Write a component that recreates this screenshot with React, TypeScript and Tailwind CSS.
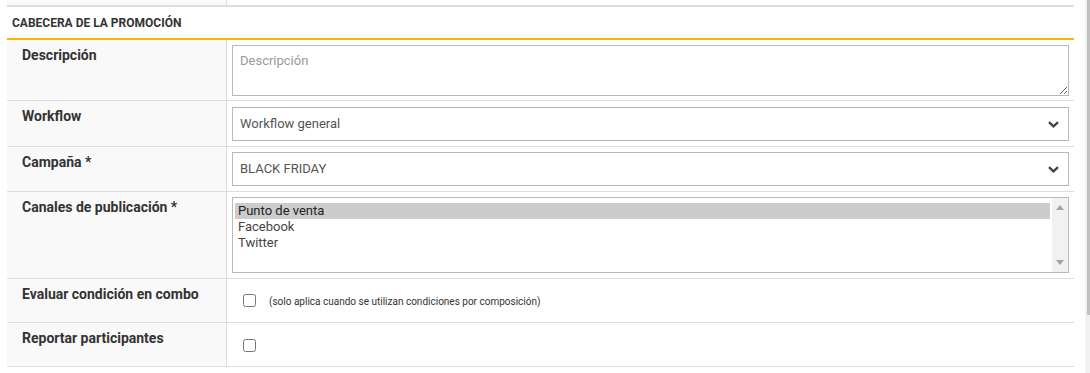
import { useState } from "react";

const canales = ["Punto de venta", "Facebook", "Twitter"];

function Chevron() {
  return (
    <svg width="11" height="7" viewBox="0 0 11 7" className="shrink-0">
      <path d="M1 1.2 L5.5 5.4 L10 1.2" fill="none" stroke="#444" strokeWidth="2.4" />
    </svg>
  );
}

function FakeSelect({ value }: { value: string }) {
  return (
    <div className="flex h-[34px] items-center justify-between border border-[#b9b9b9] bg-white pl-[7px] pr-[9px] text-[13px] text-[#555]">
      <span>{value}</span>
      <Chevron />
    </div>
  );
}

function Row({
  label,
  children,
  className = "",
}: {
  label: string;
  children: React.ReactNode;
  className?: string;
}) {
  return (
    <div className="flex border-b border-[#dddddd]">
      <div className="w-[220px] shrink-0 border-r border-[#dddddd] bg-[#f9f9f9] pl-[15px] pt-[5px] text-[14px] leading-[20px] font-bold text-[#333]">
        {label}
      </div>
      <div className={"flex-1 pl-[5px] pr-[5px] " + className}>{children}</div>
    </div>
  );
}

export default function App() {
  const [selected] = useState("Punto de venta");

  return (
    <div className="flex h-[373px] overflow-hidden bg-white font-['Roboto',sans-serif]">
      <div className="flex-1 pl-[7px] pr-[11px]">
        {/* tail of the previous block */}
        <div className="flex h-[7px] border-b-2 border-[#dddddd]">
          <div className="w-[220px] border-r border-[#dddddd] bg-[#f9f9f9]" />
        </div>

        <div className="flex h-[33px] items-center border-b-2 border-[#ffb400] pl-[5px] text-[12px] font-bold text-[#333]">
          CABECERA DE LA PROMOCIÓN
        </div>

        <Row label="Descripción" className="pt-[5px] pb-[4px]">
          <textarea
            placeholder="Descripción"
            className="block h-[51px] w-full border border-[#b9b9b9] px-[7px] pt-[6px] pb-[4px] text-[13px] leading-[18px] text-[#555] outline-none placeholder:text-[#999]"
          />
        </Row>

        <Row label="Workflow" className="pt-[6px] pb-[5px]">
          <FakeSelect value="Workflow general" />
        </Row>

        <Row label="Campaña *" className="pt-[5px] pb-[5px]">
          <FakeSelect value="BLACK FRIDAY" />
        </Row>

        <Row label="Canales de publicación *" className="pt-[5px] pb-[5px]">
          <div className="flex h-[76px] border border-[#b9b9b9] bg-white">
            <div className="flex-1 pl-[2px] pt-[5px] text-[13px] leading-[16px]">
              {canales.map((c) => (
                <div
                  key={c}
                  className={
                    "pl-[3px] " +
                    (c === selected ? "bg-[#cccccc] text-[#222]" : "text-[#444]")
                  }
                >
                  {c}
                </div>
              ))}
            </div>
            <div className="ml-[2px] flex w-[16px] flex-col items-center justify-between bg-[#f1f1f1] py-[7px]">
              <svg width="8" height="5" viewBox="0 0 8 5">
                <path d="M0 5 L4 0 L8 5 Z" fill="#a3a3a3" />
              </svg>
              <svg width="8" height="5" viewBox="0 0 8 5">
                <path d="M0 0 L4 5 L8 0 Z" fill="#a3a3a3" />
              </svg>
            </div>
          </div>
        </Row>

        <Row label="Evaluar condición en combo" className="flex h-[43px] items-center pl-[16px]">
          <input type="checkbox" className="m-0 h-[13px] w-[13px]" />
          <span className="ml-[13px] pt-[2px] text-[10px] text-[#333]">
            (solo aplica cuando se utilizan condiciones por composición)
          </span>
        </Row>

        <Row label="Reportar participantes" className="flex h-[43px] items-center pl-[16px] pt-[1px]">
          <input type="checkbox" className="m-0 h-[13px] w-[13px]" />
        </Row>
      </div>

      {/* page scrollbar edge */}
      <div className="w-[5px] bg-[#f1f1f1] pl-[2px]">
        <div className="h-[315px] bg-[#c1c1c1]" />
      </div>
    </div>
  );
}
